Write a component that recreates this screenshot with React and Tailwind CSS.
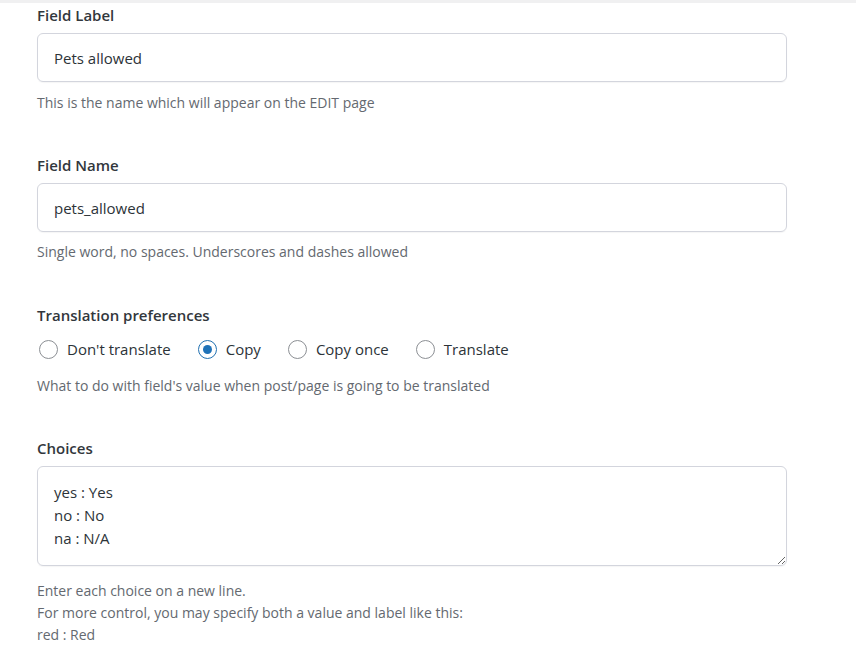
import React, { useState } from 'react';

const Label = ({ children }) => (
  <div className="text-[15px] font-semibold text-[#32373c] leading-[20px]">{children}</div>
);

const Help = ({ children }) => (
  <p className="text-[14px] text-[#646970] leading-[22px]">{children}</p>
);

const Radio = ({ label, checked, onClick }) => (
  <label onClick={onClick} className="flex items-center gap-[9px] cursor-pointer">
    <span
      className={`w-[19px] h-[19px] rounded-full border flex items-center justify-center bg-white ${
        checked ? 'border-[#2271b1] border-[1.5px]' : 'border-[#8c8f94]'
      }`}
    >
      {checked && <span className="w-[9px] h-[9px] rounded-full bg-[#1f72b8]" />}
    </span>
    <span className="text-[15px] text-[#2c3338]">{label}</span>
  </label>
);

export default function App() {
  const [pref, setPref] = useState('copy');

  return (
    <div className="min-h-[665px] bg-white font-['Open_Sans','Noto_Sans',sans-serif] border-t-[3px] border-[#f0f0f1]">
      <div className="pl-[37px] w-[787px]">

        {/* Field Label */}
        <div className="pt-[2px]">
          <Label>Field Label</Label>
          <input
            defaultValue="Pets allowed"
            className="mt-[8px] w-full h-[49px] rounded-[6px] border border-[#d3d5dd] px-[16px] text-[15px] text-[#2c3338] outline-none shadow-[0_1px_1px_rgba(0,0,0,0.04)]"
          />
          <div className="mt-[10px]"><Help>This is the name which will appear on the EDIT page</Help></div>
        </div>

        {/* Field Name */}
        <div className="mt-[41px]">
          <Label>Field Name</Label>
          <input
            defaultValue="pets_allowed"
            className="mt-[8px] w-full h-[49px] rounded-[6px] border border-[#d3d5dd] px-[16px] text-[15px] text-[#2c3338] outline-none shadow-[0_1px_1px_rgba(0,0,0,0.04)]"
          />
          <div className="mt-[9px]"><Help>Single word, no spaces. Underscores and dashes allowed</Help></div>
        </div>

        {/* Translation preferences */}
        <div className="mt-[42px]">
          <Label>Translation preferences</Label>
          <div className="mt-[13px] flex items-center gap-[27px] pl-[2px]">
            <Radio label="Don't translate" checked={pref === 'none'} onClick={() => setPref('none')} />
            <Radio label="Copy" checked={pref === 'copy'} onClick={() => setPref('copy')} />
            <Radio label="Copy once" checked={pref === 'once'} onClick={() => setPref('once')} />
            <Radio label="Translate" checked={pref === 'translate'} onClick={() => setPref('translate')} />
          </div>
          <div className="mt-[14px]"><Help>What to do with field's value when post/page is going to be translated</Help></div>
        </div>

        {/* Choices */}
        <div className="mt-[41px]">
          <Label>Choices</Label>
          <textarea
            defaultValue={'yes : Yes\nno : No\nna : N/A'}
            className="mt-[8px] block w-full h-[100px] rounded-[6px] border border-[#d3d5dd] px-[16px] py-[14px] text-[15px] leading-[23px] text-[#2c3338] outline-none resize-y shadow-[0_1px_1px_rgba(0,0,0,0.04)]"
          />
          <div className="mt-[14px]">
            <Help>Enter each choice on a new line.</Help>
            <Help>For more control, you may specify both a value and label like this:</Help>
            <Help>red : Red</Help>
          </div>
        </div>

      </div>
    </div>
  );
}
